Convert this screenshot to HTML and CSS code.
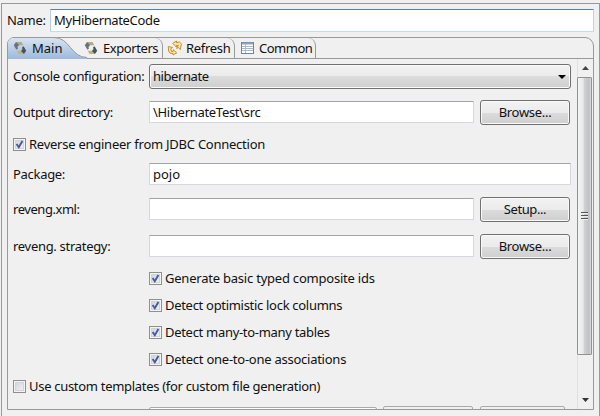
FILE: index.html
```html
<!DOCTYPE html>
<html lang="en">
<head>
<meta charset="utf-8">
<title>Hibernate Code Generation</title>
<link rel="stylesheet" href="styles.css">
</head>
<body>
<svg class="defs" aria-hidden="true">
  <defs>
    <linearGradient id="tabfill" x1="0" y1="0" x2="0" y2="1"><stop offset="0" stop-color="#d9e4f2"/><stop offset="1" stop-color="#9db9dc"/></linearGradient>
    <symbol id="hib" viewBox="0 0 14 14">
      <path d="M3 1h5.5l1.8 3.2H6L4.6 6.5z" fill="#b3aa83"/>
      <path d="M3 1L.8 4.2 3.4 8.8 5 7.6 4.4 5.8 6 4z" fill="#66757a"/>
      <path d="M11 13H5.5L3.7 9.8H8l1.4-2.3z" fill="#c0b482"/>
      <path d="M11 13l2.2-3.2-2.6-4.6L9 6.4l.6 1.8L8 10z" fill="#46545b"/>
    </symbol>
    <symbol id="check" viewBox="0 0 11 11">
      <path d="M2.6 5l2.2 3.2L8.4 2" fill="none" stroke="#465aa0" stroke-width="1.9"/>
    </symbol>
  </defs>
</svg>
<div class="frame">
  <div class="name-row"><label class="t-name">Name:</label><div class="field name-field"><span class="t-code">MyHibernateCode</span></div></div>
  <div class="folder">
    <div class="tabs">
      <div class="tab main">
        <svg class="curve" width="79" height="22"><path d="M0 22V7Q0 .5 7 .5H46C62 .5 63 20.5 79 20.5V22z" fill="url(#tabfill)"/><path d="M5 .5H46C62 .5 63 20.5 79 20.5" fill="none" stroke="#999"/></svg>
        <svg class="ico" width="14" height="14"><use href="#hib"/></svg><span class="t-main">Main</span>
      </div>
      <div class="tab exporters"><svg class="ico" width="14" height="14"><use href="#hib"/></svg><span class="t-exp">Exporters</span></div>
      <div class="tab refresh">
        <svg class="ico" width="16" height="16" viewBox="0 0 16 16"><g fill="#ffe6a0" stroke="#c08420" stroke-width=".9" stroke-linejoin="round"><path d="M5.8 3.3L9.5 1l-.2 1.8 3-.9 2.2 2-1.3 5.6-1.8-2-1.9.9 1.8-3.2-1.8.2-.2 1.6z"/><path d="M1.3 6.5l4.2 1-1.7 1.2.5 2.6 1.8.2.2-1.8 3.4 3.2-3.6 2-.1-1.4-3-.4L1.6 11z"/></g></svg>
        <span class="t-ref">Refresh</span>
      </div>
      <div class="tab common">
        <svg class="ico" width="13" height="12"><rect x=".5" y=".5" width="12" height="11" fill="#fff" stroke="#6c83a5"/><path d="M1 1.5h11" stroke="#8da3c3" stroke-width="2"/><path d="M1 4.5h11M1 6.5h11M1 8.5h11M4.5 2v9" stroke="#a9b8cc"/></svg>
        <span class="t-com">Common</span>
      </div>
    </div>
    <div class="body">
      <div class="form">
        <label class="t-cfg">Console configuration:</label><div class="combo wide"><span class="t-hib">hibernate</span><i class="down"></i></div>
        <label class="t-out">Output directory:</label><div class="field low"><span class="t-src">\HibernateTest\src</span></div><button class="btn"><span class="t-brw">Browse...</span></button>
        <div class="check all"><i class="box"><svg width="11" height="11"><use href="#check"/></svg></i><span class="t-rev">Reverse engineer from JDBC Connection</span></div>
        <label class="t-pkg short">Package:</label><div class="field wide"><span class="t-pojo">pojo</span></div>
        <label class="t-xml">reveng.xml:</label><div class="field low"></div><button class="btn"><span class="t-set">Setup...</span></button>
        <label class="t-str">reveng. strategy:</label><div class="field low"></div><button class="btn"><span class="t-brw">Browse...</span></button>
        <div class="check opt"><i class="box"><svg width="11" height="11"><use href="#check"/></svg></i><span class="t-c1">Generate basic typed composite ids</span></div>
        <div class="check opt"><i class="box"><svg width="11" height="11"><use href="#check"/></svg></i><span class="t-c2">Detect optimistic lock columns</span></div>
        <div class="check opt"><i class="box"><svg width="11" height="11"><use href="#check"/></svg></i><span class="t-c3">Detect many-to-many tables</span></div>
        <div class="check opt"><i class="box"><svg width="11" height="11"><use href="#check"/></svg></i><span class="t-c4">Detect one-to-one associations</span></div>
        <div class="check all"><i class="box"></i><span class="t-c5">Use custom templates (for custom file generation)</span></div>
        <div class="cut"><i class="cut-field"></i><i class="cut-btn"></i><i class="cut-btn last"></i></div>
      </div>
      <div class="scroll">
        <svg class="up" width="7" height="4"><path d="M0 4L3.5 0 7 4z" fill="#444"/></svg>
        <div class="thumb"><i></i><i></i><i></i></div>
        <svg class="dn" width="7" height="4"><path d="M0 0h7L3.5 4z" fill="#333"/></svg>
      </div>
    </div>
  </div>
</div>
</body>
</html>
```
FILE: styles.css
```css
* { box-sizing: border-box; }
body { margin: 0; width: 600px; height: 416px; overflow: hidden; background: #f0f0f0; color: #111; font: 13px/20px "Noto Sans", "Open Sans", sans-serif; }
span, label { white-space: nowrap; letter-spacing: -.3px; }
.t-name { letter-spacing: -.3px; }
.t-xml { letter-spacing: -.45px; }
.t-code { letter-spacing: -.35px; }
.t-hib, .t-exp, .t-set { letter-spacing: -.42px; }
.t-pkg { letter-spacing: -.3px; }
.t-com { letter-spacing: -.5px; }
.t-rev, .t-c4 { letter-spacing: -.25px; }
.t-c1 { letter-spacing: -.22px; }
.t-c2, .t-c3 { letter-spacing: -.3px; }
.t-pojo, .t-main { letter-spacing: 0; }
.defs { display: block; width: 0; height: 0; position: absolute; }
.frame { margin: 3px 0 0 1px; width: 599px; height: 413px; border: 1px solid #999; border-bottom: 0; padding: 5px 0 0 5px; }
.name-row { display: flex; height: 28px; }
.name-row label { width: 43px; line-height: 23px; }
.field { height: 22px; background: #fff; border: 1px solid #d5d8de; border-top-color: #a0a2a8; border-radius: 1px; padding-left: 3px; line-height: 20px; }
.name-field { width: 544px; height: 23px; border-color: #b5cfe7 #b7d5ea #c5daeb #b5cfe7; border-top-color: #5580a5; }
.folder { width: 587px; height: 373px; border: 1px solid #999; border-radius: 7px 9px 0 0; }
.tabs { display: flex; height: 21px; border-bottom: 1px solid #999; }
.tab { position: relative; display: flex; align-items: center; height: 20px; line-height: 20px; flex: none; }
.curve { position: absolute; left: 0; top: -1px; overflow: visible; }
.ico { position: relative; flex: none; margin-right: 5px; }
.tab span { position: relative; }
.main { width: 76px; padding-left: 5px; }
.exporters { width: 79px; }
.refresh { width: 72px; padding-left: 4px; }
.common { width: 81px; padding-left: 6px; }
.exporters, .refresh, .common { border-right: 1px solid #999; border-top-right-radius: 8px; }
.refresh .ico { margin-right: 3px; }
.body { display: flex; height: 350px; }
.form { width: 569px; flex: none; padding: 5px 0 0 5px; display: grid; grid-template-columns: 136px 325px 96px; grid-template-rows: 36px 38px 25px 34px 37px 38px 27px 27px 27px 27px 26px 4px; align-items: start; overflow: hidden; }
.form label { line-height: 25px; }
.form .short { line-height: 22px; }
.low { margin-top: 1px; }
.wide { grid-column: 2 / 4; width: 422px; }
.btn { margin: 0 0 0 6px; padding: 0 0 1px; width: 90px; height: 25px; border: 1px solid #707070; border-radius: 3px; box-shadow: inset 0 0 0 1px #fafafa; background: linear-gradient(#f2f2f2 0, #ebebeb 50%, #dcdcdc 50%, #cfcfcf); color: #111; font: inherit; line-height: 22px; }
.combo { display: flex; align-items: center; justify-content: space-between; height: 25px; border: 1px solid #707070; border-radius: 3px; box-shadow: inset 0 0 0 1px #fafafa; background: linear-gradient(#f2f2f2 0, #ebebeb 50%, #dcdcdc 50%, #cfcfcf); padding: 0 4px 0 3px; }
.combo span { margin-top: -1px; }
.down { border: 4px solid transparent; border-top-color: #000; border-bottom: 0; }
.check { display: flex; align-items: center; height: 13px; }
.check span { margin-top: -1px; }
.all { grid-column: 1 / 4; }
.opt { grid-column: 2 / 4; }
.box { width: 13px; height: 13px; margin-right: 3px; flex: none; border: 1px solid #8e8f8f; background: linear-gradient(135deg, #cbcfd5, #f6f6f6); box-shadow: inset 0 0 0 1px #f4f4f4, inset 0 0 0 2px #d0d4da; }
.box svg { display: block; }
.cut { grid-column: 1 / 4; display: flex; height: 3px; padding-left: 136px; overflow: hidden; }
.cut i { flex: none; border: 1px solid #aaa; height: 12px; border-radius: 2px; }
.cut .cut-field { width: 228px; margin: 1px 6px 0 0; background: #fff; }
.cut .cut-btn { width: 90px; margin-right: 7px; }
.cut .last { width: 85px; margin-right: 0; }
.scroll { width: 15px; display: flex; flex-direction: column; align-items: flex-start; border-left: 1px solid #e1e1e1; background: #f0f0f0; }
.up { margin: 7px 0 7px 4px; }
.thumb { width: 15px; height: 278px; margin-left: -1px; border: 1px solid #929292; border-radius: 1px; background: linear-gradient(90deg, #f5f5f5 0, #e8e8e9 40%, #cfd0d4 50%, #bfc0c5 85%, #ddd); display: flex; flex-direction: column; justify-content: center; align-items: center; gap: 1px; }
.thumb i { width: 7px; height: 2px; border-top: 1px solid #555; border-bottom: 1px solid #eee; }
.dn { margin: 43px 0 0 4px; }
```
